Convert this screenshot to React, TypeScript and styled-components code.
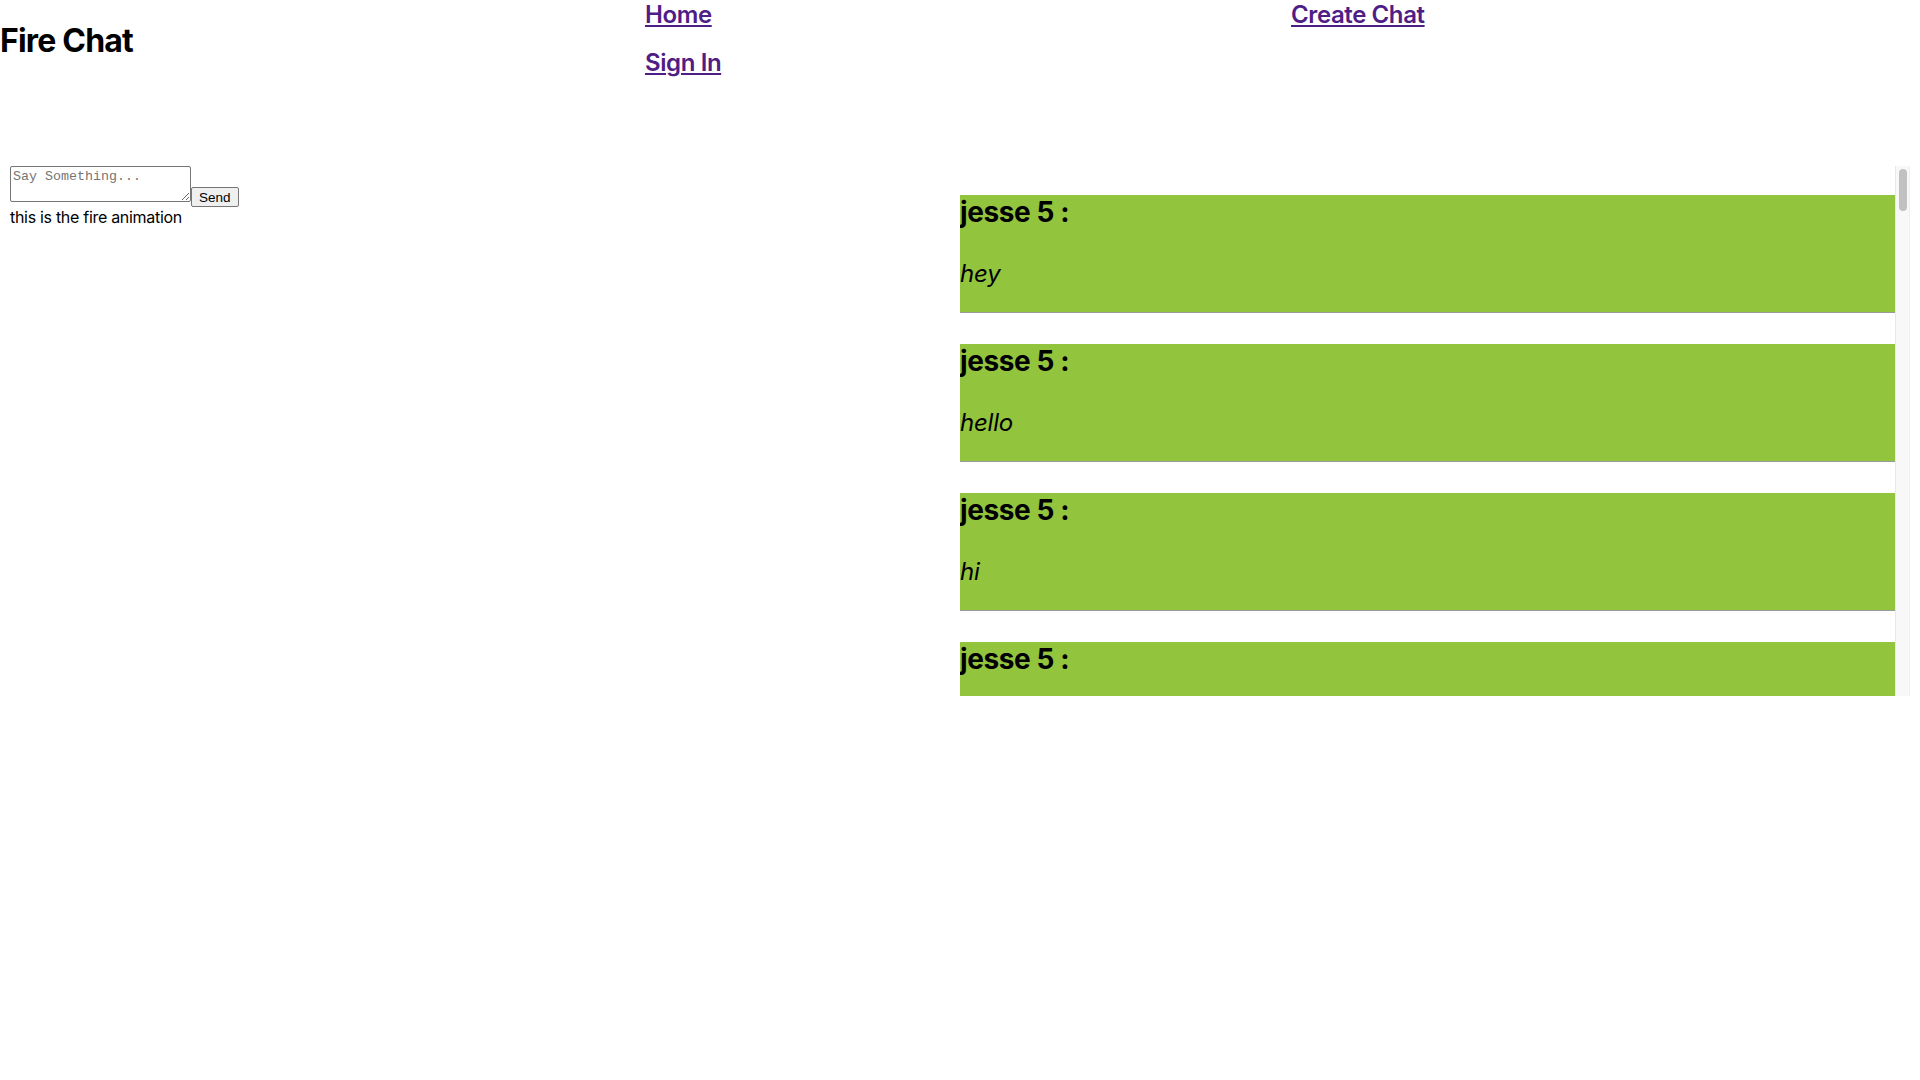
import React from "react";
import styled, { createGlobalStyle } from "styled-components";

const GlobalStyle = createGlobalStyle`
  html, body {
    margin: 0;
    padding: 0;
    background: #ffffff;
    color: #000000;
    font-family: Inter, "Noto Sans", sans-serif;
  }
`;

const Header = styled.header`
  display: grid;
  grid-template-columns: 645px 646px auto;
  align-items: start;
`;

const Title = styled.h1`
  margin: 21px 0;
  font-size: 32px;
  line-height: 39px;
  font-weight: 700;
  letter-spacing: -0.8px;
`;

const NavList = styled.ul`
  list-style: none;
  margin: 0;
  padding: 0;
  display: flex;
  flex-direction: column;
  gap: 19px;
`;

const NavLink = styled.a`
  font-size: 24px;
  line-height: 29px;
  font-weight: 600;
  color: #4f1d86;
  letter-spacing: -0.4px;
  text-decoration: underline;
  text-underline-offset: 2px;
  text-decoration-thickness: 2px;
`;

const Main = styled.main`
  display: grid;
  grid-template-columns: 1fr 1fr;
  padding: 0 10px;
  margin-top: 85px;
  align-items: start;
`;

const LeftPane = styled.section`
  display: block;
`;

const Composer = styled.form`
  margin: 0;
`;

const Input = styled.textarea`
  font-family: "Liberation Mono", monospace;
  font-size: 13.33px;
  width: 181px;
  height: 36px;
  box-sizing: border-box;
  padding: 2px;
  border: 1px solid #767676;
  border-radius: 2px;
  margin: 0;
  vertical-align: baseline;
  &::placeholder {
    color: #757575;
  }
`;

const SendButton = styled.button`
  font-family: "Liberation Sans", Arial, sans-serif;
  font-size: 13.5px;
  padding: 2px 7px 1px;
  border: 1px solid #767676;
  border-radius: 2px;
  background: #efefef;
  color: #000;
  margin: 0;
`;

const Caption = styled.div`
  font-size: 16px;
  line-height: 19px;
  letter-spacing: -0.3px;
  margin-top: 1px;
`;

const FeedFrame = styled.div`
  display: flex;
  height: 530px;
`;

const Feed = styled.div`
  flex: 1;
  overflow-y: auto;
  scrollbar-width: none;
  padding-top: 29px;
  box-sizing: border-box;
  &::-webkit-scrollbar {
    display: none;
  }
`;

const ScrollTrack = styled.div`
  width: 15px;
  box-sizing: border-box;
  background: #f8f8f8;
  border-left: 1px solid #e8e8e8;
  border-right: 1px solid #efefef;
  padding: 3px 2px 3px 3px;
  display: flex;
  flex-direction: column;
`;

const ScrollThumb = styled.div`
  height: 42px;
  width: 8px;
  border-radius: 4px;
  background: #c1c1c1;
`;

const Message = styled.div`
  background: #93c43e;
  border-bottom: 1px solid #9a9a9a;
  padding-bottom: 24px;
  margin-bottom: 31px;
`;

const Author = styled.h2`
  margin: 0;
  font-size: 28px;
  line-height: 34px;
  font-weight: 700;
  letter-spacing: -0.4px;
`;

const Body = styled.p`
  margin: 30px 0 0;
  font-size: 24px;
  line-height: 29px;
  font-style: italic;
  letter-spacing: -0.2px;
`;

const texts = ["hey", "hello", "hi", "yo", "what's up", "hey", "hello", "hi"];
const messages = Array.from({ length: 45 }, (_, i) => ({
  id: i,
  author: "jesse 5",
  text: texts[i % texts.length],
}));

export default function App() {
  return (
    <>
      <GlobalStyle />
      <Header>
        <Title>Fire Chat</Title>
        <NavList>
          <li>
            <NavLink href="#">Home</NavLink>
          </li>
          <li>
            <NavLink href="#">Sign In</NavLink>
          </li>
        </NavList>
        <NavList>
          <li>
            <NavLink href="#">Create Chat</NavLink>
          </li>
        </NavList>
      </Header>
      <Main>
        <LeftPane>
          <Composer onSubmit={(e) => e.preventDefault()}>
            <Input placeholder="Say Something..." />
            <SendButton type="submit">Send</SendButton>
          </Composer>
          <Caption>this is the fire animation</Caption>
        </LeftPane>
        <FeedFrame>
          <Feed>
            {messages.map((m) => (
              <Message key={m.id}>
                <Author>{m.author} :</Author>
                <Body>{m.text}</Body>
              </Message>
            ))}
          </Feed>
          <ScrollTrack>
            <ScrollThumb />
          </ScrollTrack>
        </FeedFrame>
      </Main>
    </>
  );
}
